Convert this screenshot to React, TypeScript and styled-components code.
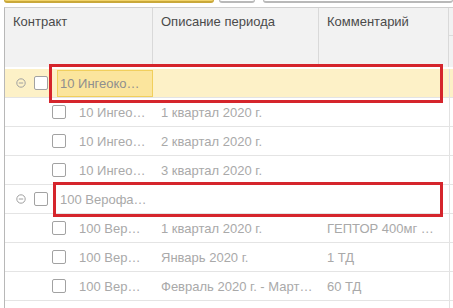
import React from "react";
import styled, { createGlobalStyle } from "styled-components";

const Global = createGlobalStyle`
  html, body { margin: 0; padding: 0; background: #ffffff; }
  body { font-family: "Liberation Sans", Arial, sans-serif; }
`;

const Page = styled.div`
  position: relative;
  width: 453px;
  height: 308px;
  overflow: hidden;
  background: #fff;
`;

const Toolbar = styled.div`
  display: flex;
  align-items: flex-end;
  height: 4px;
  overflow: hidden;
  padding-left: 4px;
`;

const ToolButton = styled.div<{ $w: number; $primary?: boolean; $gap?: number }>`
  flex: none;
  width: ${(p) => p.$w}px;
  height: 20px;
  margin-left: ${(p) => p.$gap ?? 0}px;
  margin-bottom: 1px;
  box-sizing: border-box;
  border-radius: 3px;
  border: 1px solid ${(p) => (p.$primary ? "#c9a83a" : "#b9b9b9")};
  border-bottom-width: 2px;
  background: ${(p) => (p.$primary ? "#f2d46a" : "#ffffff")};
`;

const Table = styled.div`
  margin-top: 3px;
  margin-left: 4px;
  border-left: 1px solid #b8b8b8;
  border-top: 1px solid #cfcfcf;
`;

const cols = "148px 166px 130px 1fr";

const HeaderRow = styled.div`
  display: grid;
  grid-template-columns: ${cols};
  height: 59px;
  background: #f2f2f2;
  border-bottom: 2px solid #ffffff;
`;

const HeaderCell = styled.div`
  box-sizing: border-box;
  border-right: 1px solid #d9d9d9;
  padding: 6px 0 0 8px;
  font-size: 13px;
  line-height: 15px;
  color: #4a4a4a;
  white-space: nowrap;
  overflow: hidden;
`;

const HeaderStub = styled.div`
  display: flex;
  flex-direction: column;
`;

const HeaderStubTop = styled.div`
  height: 27px;
  border-bottom: 1px solid #dcdcdc;
`;

const Row = styled.div<{ $active?: boolean }>`
  display: grid;
  grid-template-columns: ${cols};
  height: 28px;
  border-bottom: 1px solid #e4e4e4;
  background: ${(p) => (p.$active ? "#fdf1c7" : "#ffffff")};
`;

const Cell = styled.div<{ $indent?: number }>`
  display: flex;
  align-items: center;
  box-sizing: border-box;
  padding-left: ${(p) => p.$indent ?? 8}px;
  font-size: 13px;
  color: #a9a9a9;
  white-space: nowrap;
  overflow: hidden;
`;

const StubCell = styled.div`
  border-left: 1px solid #e2e2e2;
`;

const Toggle = styled.svg`
  flex: none;
  width: 10px;
  height: 10px;
  margin-right: 8px;
`;

const Check = styled.span`
  flex: none;
  box-sizing: border-box;
  width: 14px;
  height: 14px;
  border: 1px solid #a2a2a2;
  border-radius: 2px;
  background: #fff;
`;

const GroupText = styled.div<{ $current?: boolean }>`
  flex: 1;
  align-self: stretch;
  margin: 1px 0 0 9px;
  padding-left: 2px;
  display: flex;
  align-items: center;
  box-sizing: border-box;
  border: 1px solid ${(p) => (p.$current ? "#f1cf5c" : "transparent")};
  background: ${(p) => (p.$current ? "#fbe59d" : "transparent")};
  color: ${(p) => (p.$current ? "#8f8f8f" : "#a9a9a9")};
`;

const ItemText = styled.span`
  margin-left: 13px;
`;

const Annotation = styled.div<{ $x: number; $y: number; $w: number; $h: number }>`
  position: absolute;
  left: ${(p) => p.$x}px;
  top: ${(p) => p.$y}px;
  width: ${(p) => p.$w}px;
  height: ${(p) => p.$h}px;
  box-sizing: border-box;
  border: 3px solid #d5252c;
  pointer-events: none;
`;

const ToggleIcon = () => (
  <Toggle viewBox="0 0 10 10">
    <circle cx="5" cy="5" r="4.2" fill="none" stroke="#a0a0a0" strokeWidth="1" />
    <line x1="2.8" y1="5" x2="7.2" y2="5" stroke="#a0a0a0" strokeWidth="1" />
  </Toggle>
);

type Item = { c: string; d: string; k: string };

const groups: { title: string; current?: boolean; items: Item[] }[] = [
  {
    title: "10 Ингеоко…",
    current: true,
    items: [
      { c: "10 Ингео…", d: "1 квартал 2020 г.", k: "" },
      { c: "10 Ингео…", d: "2 квартал 2020 г.", k: "" },
      { c: "10 Ингео…", d: "3 квартал 2020 г.", k: "" },
    ],
  },
  {
    title: "100 Верофа…",
    items: [
      { c: "100 Вер…", d: "1 квартал 2020 г.", k: "ГЕПТОР 400мг …" },
      { c: "100 Вер…", d: "Январь 2020 г.", k: "1 ТД" },
      { c: "100 Вер…", d: "Февраль 2020 г. - Март…", k: "60 ТД" },
      { c: "", d: "", k: "" },
    ],
  },
];

export default function App() {
  return (
    <Page>
      <Global />
      <Toolbar>
        <ToolButton $w={210} $primary />
        <ToolButton $w={36} $gap={5} />
        <ToolButton $w={190} $gap={8} />
      </Toolbar>
      <Table>
        <HeaderRow>
          <HeaderCell>Контракт</HeaderCell>
          <HeaderCell>Описание периода</HeaderCell>
          <HeaderCell>Комментарий</HeaderCell>
          <HeaderStub>
            <HeaderStubTop />
          </HeaderStub>
        </HeaderRow>
        {groups.map((g) => (
          <React.Fragment key={g.title}>
            <Row $active={g.current}>
              <Cell $indent={11}>
                <ToggleIcon />
                <Check />
                <GroupText $current={g.current}>{g.title}</GroupText>
              </Cell>
              <Cell />
              <Cell />
              <StubCell />
            </Row>
            {g.items.map((it, i) => (
              <Row key={i}>
                <Cell $indent={47}>
                  <Check />
                  {it.c && <ItemText>{it.c}</ItemText>}
                </Cell>
                <Cell>{it.d}</Cell>
                <Cell>{it.k}</Cell>
                <StubCell />
              </Row>
            ))}
          </React.Fragment>
        ))}
      </Table>
      <Annotation $x={49} $y={64} $w={394} $h={39} />
      <Annotation $x={53} $y={182} $w={390} $h={35} />
    </Page>
  );
}
